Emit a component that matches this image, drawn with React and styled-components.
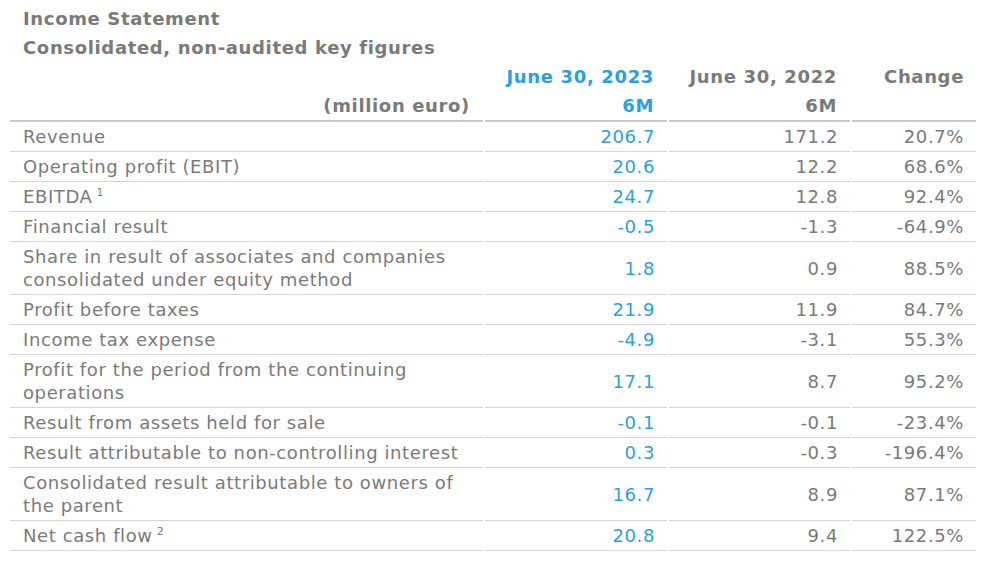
import styled, { createGlobalStyle } from 'styled-components';

const GlobalStyle = createGlobalStyle`
    body {
        margin: 0;
        background: #fff;
        font-family: "DejaVu Sans", Verdana, sans-serif;
        color: #7a7a7a;
    }
`;

const Wrapper = styled.div`
    padding: 4px 0 0 8px;
    width: 970px;
`;

const Title = styled.div`
    padding-left: 15px;
    font-size: 18px;
    font-weight: bold;
    line-height: 29px;
    letter-spacing: 0.65px;
    color: #7a7a7a;
`;

const Table = styled.table`
    width: 970px;
    table-layout: fixed;
    border-collapse: separate;
    border-spacing: 2px 0;
    font-size: 18px;
    letter-spacing: 0.6px;
`;

const HeadCell = styled.th`
    padding: 0 ${props => props.$pr || 13}px 0 0;
    line-height: 29px;
    font-weight: bold;
    letter-spacing: 0.65px;
    text-align: right;
    white-space: nowrap;
    color: ${props => props.$blue ? '#2b9fe3' : '#7a7a7a'};
    border-bottom: ${props => props.$line ? '2px solid #c9c9c9' : 'none'};
`;

const Label = styled.td`
    padding: 3px 13px 3px 13px;
    line-height: 23px;
    border-bottom: 1px solid #d4d4d4;
    vertical-align: middle;
`;

const Value = styled.td`
    padding: 3px ${props => props.$pr || 12}px 3px 0;
    line-height: 23px;
    text-align: right;
    border-bottom: 1px solid #d4d4d4;
    vertical-align: middle;
    color: ${props => props.$blue ? '#2b9fe3' : '#7a7a7a'};
`;

const Note = styled.sup`
    font-size: 11px;
    vertical-align: 7px;
    line-height: 0;
    margin-left: 4px;
`;

const ROWS = [
    { label: 'Revenue', cur: '206.7', prev: '171.2', change: '20.7%' },
    { label: 'Operating profit (EBIT)', cur: '20.6', prev: '12.2', change: '68.6%' },
    { label: 'EBITDA', note: '1', cur: '24.7', prev: '12.8', change: '92.4%' },
    { label: 'Financial result', cur: '-0.5', prev: '-1.3', change: '-64.9%' },
    { label: 'Share in result of associates and companies consolidated under equity method', cur: '1.8', prev: '0.9', change: '88.5%' },
    { label: 'Profit before taxes', cur: '21.9', prev: '11.9', change: '84.7%' },
    { label: 'Income tax expense', cur: '-4.9', prev: '-3.1', change: '55.3%' },
    { label: 'Profit for the period from the continuing operations', cur: '17.1', prev: '8.7', change: '95.2%' },
    { label: 'Result from assets held for sale', cur: '-0.1', prev: '-0.1', change: '-23.4%' },
    { label: 'Result attributable to non-controlling interest', cur: '0.3', prev: '-0.3', change: '-196.4%' },
    { label: 'Consolidated result attributable to owners of the parent', cur: '16.7', prev: '8.9', change: '87.1%' },
    { label: 'Net cash flow', note: '2', cur: '20.8', prev: '9.4', change: '122.5%' },
];

function App () {
    return (
        <Wrapper>
            <GlobalStyle />
            <Title>Income Statement</Title>
            <Title>Consolidated, non-audited key figures</Title>
            <Table>
                <colgroup>
                    <col style={{width: '473px'}} />
                    <col style={{width: '182px'}} />
                    <col style={{width: '181px'}} />
                    <col style={{width: '124px'}} />
                </colgroup>
                <thead>
                    <tr>
                        <HeadCell></HeadCell>
                        <HeadCell $blue>June 30, 2023</HeadCell>
                        <HeadCell>June 30, 2022</HeadCell>
                        <HeadCell $pr={12}>Change</HeadCell>
                    </tr>
                    <tr>
                        <HeadCell $line>(million euro)</HeadCell>
                        <HeadCell $line $blue>6M</HeadCell>
                        <HeadCell $line>6M</HeadCell>
                        <HeadCell $line></HeadCell>
                    </tr>
                </thead>
                <tbody>
                    {ROWS.map((row, index) =>
                        <tr key={index}>
                            <Label>
                                {row.label}
                                {row.note && <Note>{row.note}</Note>}
                            </Label>
                            <Value $blue>{row.cur}</Value>
                            <Value>{row.prev}</Value>
                            <Value $pr={12}>{row.change}</Value>
                        </tr>
                    )}
                </tbody>
            </Table>
        </Wrapper>
    )
}

export default App;
